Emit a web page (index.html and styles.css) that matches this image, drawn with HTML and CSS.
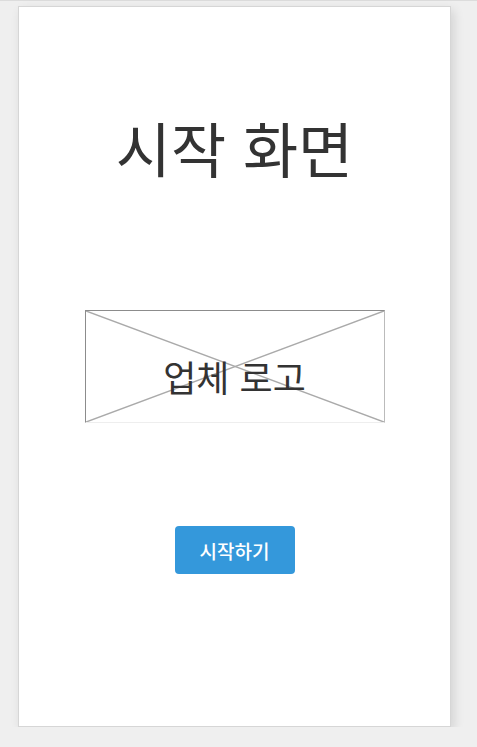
FILE: index.html
```html
<!DOCTYPE html>
<html lang="ko">
<head>
<meta charset="utf-8">
<link rel="stylesheet" href="styles.css">
</head>
<body>
<div class="topline"></div>
<main class="screen">
  <h1 class="title">시작 화면</h1>
  <div class="logo">
    <svg class="cross" viewBox="0 0 300 112" preserveAspectRatio="none">
      <line x1="0" y1="0" x2="300" y2="112"/>
      <line x1="300" y1="0" x2="0" y2="112"/>
    </svg>
    <span class="logo-text">업체 로고</span>
  </div>
  <button class="start">시작하기</button>
</main>
</body>
</html>
```
FILE: styles.css
```css
html, body {
  margin: 0;
  padding: 0;
  background: #efefef;
  font-family: "Noto Sans CJK KR", "Noto Sans", sans-serif;
}
.topline {
  height: 1px;
  background: #dcdcdc;
}
.screen {
  box-sizing: border-box;
  width: 433px;
  height: 721px;
  margin: 5px 0 0 18px;
  background: #fff;
  border: 1px solid #d6d6d6;
  box-shadow: 3px 4px 10px rgba(0,0,0,0.12);
  display: flex;
  flex-direction: column;
  align-items: center;
}
.title {
  margin: 104px 0 0;
  height: 72px;
  font-size: 60px;
  line-height: 72px;
  font-weight: 400;
  color: #333;
}
.logo {
  position: relative;
  box-sizing: border-box;
  width: 300px;
  height: 113px;
  margin-top: 127px;
  padding-top: 18px;
  border: 1px solid #8c8c8c;
  border-bottom-color: #eee;
  border-right-color: #bbb;
  display: flex;
  align-items: center;
  justify-content: center;
}
.cross {
  position: absolute;
  inset: 0;
  width: 100%;
  height: 100%;
}
.cross line {
  stroke: #aaa;
  stroke-width: 1.5;
}
.logo-text {
  position: relative;
  font-size: 36px;
  color: #333;
  line-height: 1;
}
.start {
  margin-top: 103px;
  width: 120px;
  height: 48px;
  border: 0;
  border-radius: 4px;
  background: #3498db;
  color: #fff;
  font-family: "Noto Sans CJK KR", sans-serif;
  font-size: 19px;
  font-weight: 500;
}
```
